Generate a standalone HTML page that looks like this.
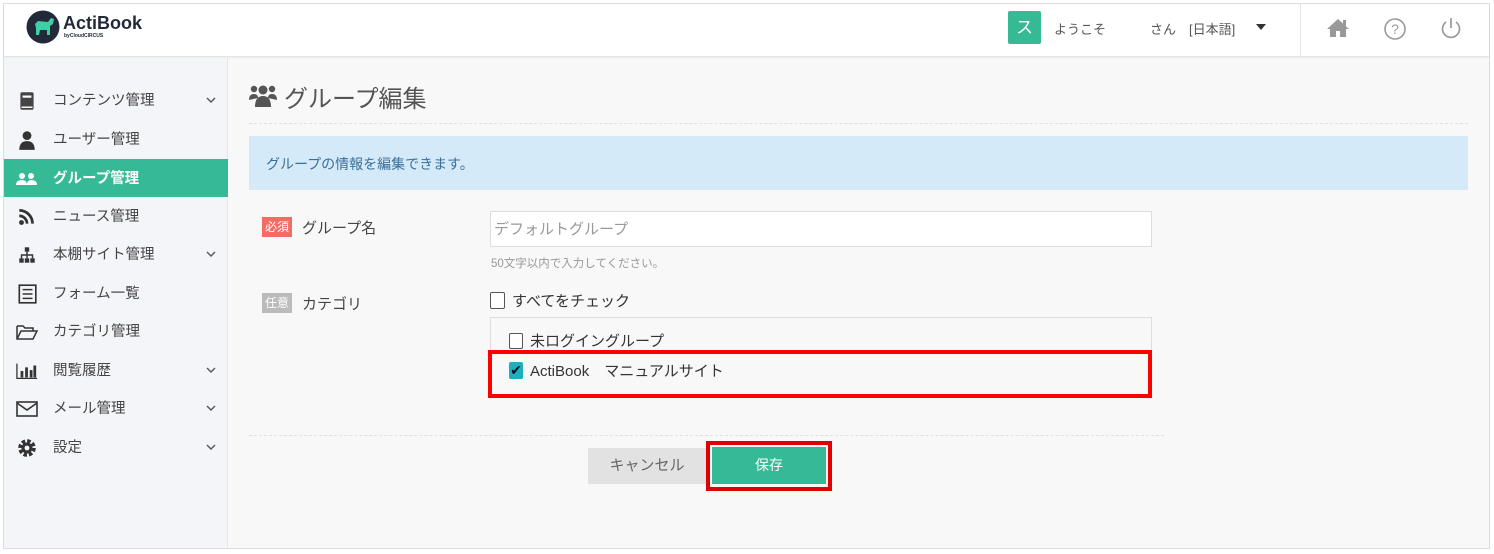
<!DOCTYPE html>
<html><head><meta charset="utf-8"><style>
*{margin:0;padding:0;box-sizing:border-box}
body{width:1494px;height:554px;background:#fff;font-family:"Liberation Sans","Noto Sans CJK JP",sans-serif;position:relative;overflow:hidden;color:#333}
.a{position:absolute}
.frame{left:3px;top:3px;width:1487px;height:546px;border:1px solid #ddd;background:#f8f8f8}
.hdr{left:4px;top:4px;width:1485px;height:53px;background:#fff;border-bottom:1px solid #e4e4e4;box-shadow:0 1px 2px rgba(0,0,0,.05)}
.side{left:4px;top:58px;width:224px;height:490px;background:#f4f5f8;border-right:1px solid #e6e6e6}
.it{position:absolute;left:4px;width:224px;height:38px;font-size:14.5px;color:#444;line-height:40px}
.it .t{position:absolute;left:49px}
.it .ic{position:absolute;left:12px;top:10px;width:22px;height:20px}
.it .cv{position:absolute;left:202px;top:16px;width:10px;height:7px}
.on{background:#36b995;color:#fff;font-weight:bold}
.lbl{font-size:12px;color:#fff;padding:0 3px;height:20px;line-height:20px}
</style></head><body>
<div class="a frame"></div>
<div class="a hdr"></div>
<svg class="a" style="left:26px;top:10px" width="36" height="36" viewBox="0 0 36 36"><circle cx="17" cy="17" r="16.5" fill="#222a3a"/><path d="M9 14 L12 11 L22 12 L25 8 L28 9 L27 14 L24 16 L24 25 L21 25 L21 20 L14 20 L13 25 L10 25 L10 18 Z" fill="#3fcfa5"/></svg>
<div class="a" style="left:63px;top:13px;font-size:18px;font-weight:bold;color:#222a3a">ActiBook</div>
<div class="a" style="left:64px;top:33px;font-size:5px;font-weight:bold;color:#222a3a">byCloudCIRCUS</div>
<div class="a" style="left:1008px;top:11px;width:33px;height:33px;background:#36b995;border-radius:2px;color:#fff;font-size:17px;text-align:center;line-height:33px">ス</div>
<div class="a" style="left:1054px;top:19px;font-size:13px;color:#555">ようこそ</div>
<div class="a" style="left:1150px;top:19px;font-size:13px;color:#555">さん　[日本語]</div>
<div class="a" style="left:1256px;top:24px;width:0;height:0;border-left:5px solid transparent;border-right:5px solid transparent;border-top:6px solid #333"></div>
<div class="a" style="left:1300px;top:4px;width:1px;height:53px;background:#e4e4e4"></div>
<svg class="a" style="left:1326px;top:18px" width="24" height="20" viewBox="0 0 24 20"><path d="M12 1 L1 11 H4 V19 H10 V13 H14 V19 H20 V11 H23 Z" fill="#999"/><rect x="17" y="2" width="3" height="6" fill="#999"/></svg>
<svg class="a" style="left:1383px;top:17px" width="24" height="24" viewBox="0 0 24 24"><circle cx="12" cy="12" r="10" fill="none" stroke="#999" stroke-width="1.6"/><text x="12" y="17" font-size="14" text-anchor="middle" fill="#999" font-family="Liberation Sans">?</text></svg>
<svg class="a" style="left:1439px;top:16px" width="24" height="24" viewBox="0 0 24 24"><path d="M7 6 A8.5 8.5 0 1 0 17 6" fill="none" stroke="#999" stroke-width="1.7"/><line x1="12" y1="2" x2="12" y2="12" stroke="#999" stroke-width="1.7"/></svg>
<div class="a side"></div>
<div class="it" style="top:81px"><svg class="ic" viewBox="0 0 20 18"><rect x="4" y="1" width="12" height="16" rx="1.5" fill="#444"/><rect x="6" y="4" width="8" height="2" fill="#fff"/><rect x="5" y="14" width="10" height="1.3" fill="#fff"/></svg><span class="t">コンテンツ管理</span><svg class="cv" viewBox="0 0 10 7"><path d="M1 1L5 5L9 1" fill="none" stroke="#555" stroke-width="1.4"/></svg></div>
<div class="it" style="top:120px"><svg class="ic" viewBox="0 0 20 18"><circle cx="10" cy="5" r="4" fill="#333"/><path d="M3 18 Q3 10 10 10 Q17 10 17 18Z" fill="#333"/></svg><span class="t">ユーザー管理</span></div>
<div class="it on" style="top:159px"><svg class="ic" viewBox="0 0 22 18"><circle cx="6" cy="6" r="3" fill="#fff"/><circle cx="15" cy="6" r="3" fill="#fff"/><path d="M0 15 Q0 10 6 10 Q11 10 11 15Z M11 15 Q11 10 15 10 Q21 10 21 15Z" fill="#fff"/></svg><span class="t">グループ管理</span></div>
<div class="it" style="top:197px"><svg class="ic" viewBox="0 0 20 18"><circle cx="5" cy="14" r="2.2" fill="#333"/><path d="M3 8 A7 7 0 0 1 10 15" fill="none" stroke="#333" stroke-width="2.5"/><path d="M3 3 A12 12 0 0 1 15 15" fill="none" stroke="#333" stroke-width="2.5"/></svg><span class="t">ニュース管理</span></div>
<div class="it" style="top:235px"><svg class="ic" viewBox="0 0 20 18"><rect x="8" y="2" width="4" height="4" fill="#333"/><rect x="3" y="12" width="4" height="4" fill="#333"/><rect x="8" y="12" width="4" height="4" fill="#333"/><rect x="13" y="12" width="4" height="4" fill="#333"/><path d="M10 6V12 M5 12V9H15V12" stroke="#333" stroke-width="1.3" fill="none"/></svg><span class="t">本棚サイト管理</span><svg class="cv" viewBox="0 0 10 7"><path d="M1 1L5 5L9 1" fill="none" stroke="#555" stroke-width="1.4"/></svg></div>
<div class="it" style="top:274px"><svg class="ic" viewBox="0 0 20 18"><rect x="3" y="1" width="15" height="16" fill="none" stroke="#333" stroke-width="1.5"/><path d="M6 5H15M6 9H15M6 13H15" stroke="#333" stroke-width="1.3"/></svg><span class="t">フォーム一覧</span></div>
<div class="it" style="top:312px"><svg class="ic" viewBox="0 0 22 18"><path d="M1 3H7L9 5H17V8 M1 3V16H17L21 8H5L1 16" fill="none" stroke="#333" stroke-width="1.5"/></svg><span class="t">カテゴリ管理</span></div>
<div class="it" style="top:351px"><svg class="ic" viewBox="0 0 24 18"><path d="M1 1V17H23" stroke="#333" stroke-width="1.4" fill="none"/><rect x="5" y="9" width="3" height="7" fill="#333"/><rect x="10" y="5" width="3" height="11" fill="#333"/><rect x="15" y="8" width="3" height="8" fill="#333"/><rect x="19" y="3" width="3" height="13" fill="#333"/></svg><span class="t">閲覧履歴</span><svg class="cv" viewBox="0 0 10 7"><path d="M1 1L5 5L9 1" fill="none" stroke="#555" stroke-width="1.4"/></svg></div>
<div class="it" style="top:389px"><svg class="ic" viewBox="0 0 22 18"><rect x="1" y="2" width="20" height="14" fill="none" stroke="#333" stroke-width="1.6"/><path d="M1 3L11 10L21 3" fill="none" stroke="#333" stroke-width="1.6"/></svg><span class="t">メール管理</span><svg class="cv" viewBox="0 0 10 7"><path d="M1 1L5 5L9 1" fill="none" stroke="#555" stroke-width="1.4"/></svg></div>
<div class="it" style="top:428px"><svg class="ic" viewBox="0 0 20 18"><circle cx="10" cy="9" r="6" fill="none" stroke="#333" stroke-width="4" stroke-dasharray="3 1.7"/><circle cx="10" cy="9" r="5" fill="#333"/><circle cx="10" cy="9" r="2.2" fill="#f4f5f8"/></svg><span class="t">設定</span><svg class="cv" viewBox="0 0 10 7"><path d="M1 1L5 5L9 1" fill="none" stroke="#555" stroke-width="1.4"/></svg></div>
<svg class="a" style="left:249px;top:84px" width="28" height="24" viewBox="0 0 28 24"><circle cx="5" cy="5" r="3.2" fill="#555"/><circle cx="23" cy="5" r="3.2" fill="#555"/><circle cx="14" cy="6" r="4.5" fill="#555"/><path d="M0 16 Q0 10 5 10 Q9 10 9 14Z M19 14 Q19 10 23 10 Q28 10 28 16Z" fill="#555"/><path d="M6 23 Q6 12 14 12 Q22 12 22 23Z" fill="#555"/></svg>
<div class="a" style="left:284px;top:79px;font-size:24px;color:#555">グループ編集</div>
<div class="a" style="left:249px;top:123px;width:1219px;border-top:1px dashed #e0e0e0"></div>
<div class="a" style="left:249px;top:136px;width:1219px;height:54px;background:#d4eaf8"></div>
<div class="a" style="left:266px;top:154px;font-size:14px;color:#3a6f9a">グループの情報を編集できます。</div>
<div class="a lbl" style="left:262px;top:217px;background:#f26c63">必須</div>
<div class="a" style="left:302px;top:217px;font-size:15px;color:#444">グループ名</div>
<div class="a" style="left:490px;top:211px;width:662px;height:36px;background:#fff;border:1px solid #ddd"></div>
<div class="a" style="left:494px;top:218px;font-size:15px;color:#999">デフォルトグループ</div>
<div class="a" style="left:491px;top:255px;font-size:11.5px;color:#999">50文字以内で入力してください。</div>
<div class="a lbl" style="left:262px;top:293px;background:#bbb">任意</div>
<div class="a" style="left:302px;top:293px;font-size:15px;color:#444">カテゴリ</div>
<div class="a" style="left:490px;top:292px;width:15px;height:17px;border:1.5px solid #555;border-radius:2px;background:#fff"></div>
<div class="a" style="left:512px;top:290px;font-size:15px;color:#333">すべてをチェック</div>
<div class="a" style="left:490px;top:317px;width:662px;height:80px;border:1px solid #ddd;border-bottom:none;background:#f8f8f8"></div>
<div class="a" style="left:509px;top:333px;width:14px;height:16px;border:1.5px solid #555;border-radius:2px;background:#fff"></div>
<div class="a" style="left:530px;top:330px;font-size:15px;color:#333">未ログイングループ</div>
<div class="a" style="left:488px;top:350px;width:664px;height:48px;border:4px solid #f00"></div>
<div class="a" style="left:509px;top:362px;width:14px;height:17px;background:#1ab0c0;border-radius:2px;color:#111;font-size:14px;line-height:17px;text-align:center">✔</div>
<div class="a" style="left:530px;top:360px;font-size:15px;color:#333">ActiBook　マニュアルサイト</div>
<div class="a" style="left:249px;top:435px;width:915px;border-top:1px dashed #e0e0e0"></div>
<div class="a" style="left:588px;top:448px;width:118px;height:36px;background:#e2e2e2;color:#666;font-size:15px;text-align:center;line-height:36px">キャンセル</div>
<div class="a" style="left:706px;top:441px;width:126px;height:50px;border:4px solid #e00000"></div>
<div class="a" style="left:712px;top:447px;width:114px;height:37px;background:#36b995;color:#fff;font-size:14px;text-align:center;line-height:37px">保存</div>
</body></html>
